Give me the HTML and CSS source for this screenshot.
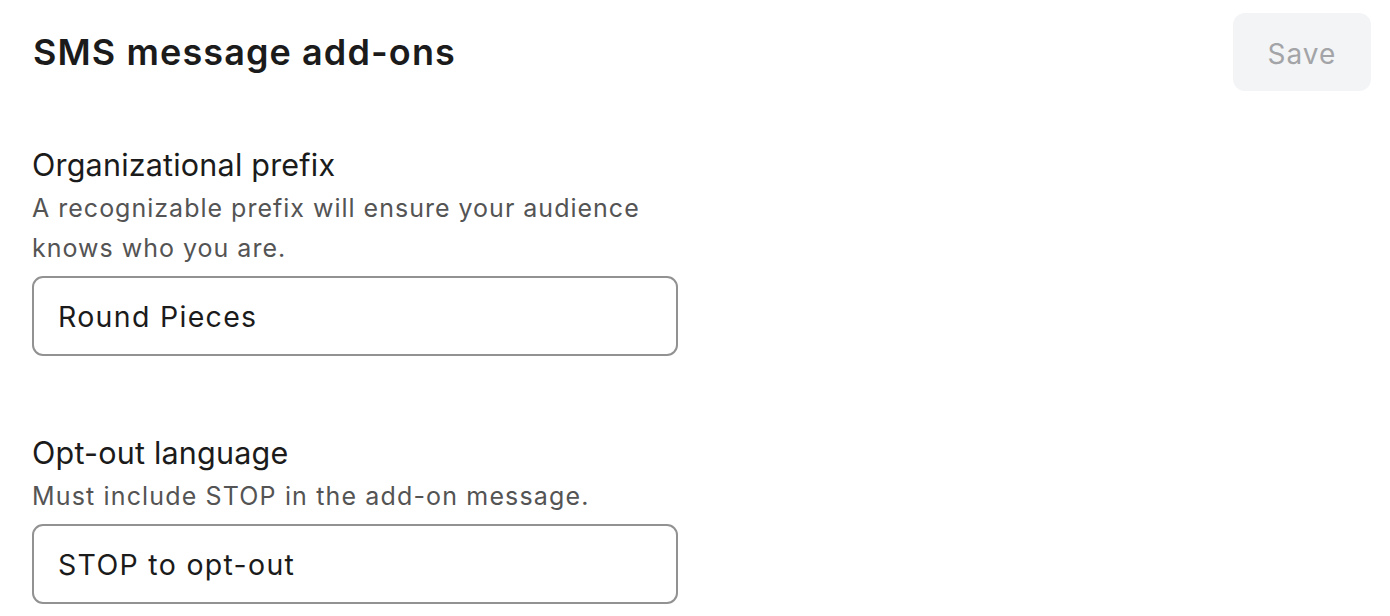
FILE: index.html
```html
<!DOCTYPE html>
<html lang="en">
<head>
<meta charset="utf-8">
<title>SMS message add-ons</title>
<link rel="stylesheet" href="styles.css">
</head>
<body>
<div class="page">
  <header class="header">
    <h1 class="title">SMS message add-ons</h1>
    <button class="save" type="button" disabled>Save</button>
  </header>
  <section class="field field-first">
    <label class="label" for="prefix">Organizational prefix</label>
    <p class="help">A recognizable prefix will ensure your audience<br>knows who you are.</p>
    <input class="input" id="prefix" type="text" value="Round Pieces">
  </section>
  <section class="field field-second">
    <label class="label" for="optout">Opt-out language</label>
    <p class="help help-wide">Must include STOP in the add-on message.</p>
    <input class="input" id="optout" type="text" value="STOP to opt-out">
  </section>
</div>
</body>
</html>
```
FILE: styles.css
```css
* { box-sizing: border-box; }
html, body { margin: 0; padding: 0; background: #ffffff; }
body {
  font-family: Inter, "Noto Sans", "Liberation Sans", sans-serif;
  color: #1b1b1b;
}
.page {
  padding: 13px 19px 0 32px;
}
.header {
  display: flex;
  justify-content: space-between;
  align-items: center;
  height: 78px;
}
.title {
  margin: 0 0 0 1px;
  font-size: 36px;
  font-weight: 600;
  letter-spacing: 1.1px;
  color: #1b1b1b;
}
.save {
  width: 138px;
  height: 78px;
  padding: 3px 0 0;
  border: none;
  border-radius: 12px;
  background: #f3f4f6;
  color: #a3a4a7;
  font-family: inherit;
  font-size: 28px;
  font-weight: 400;
  letter-spacing: 1px;
}
.field {
  display: flex;
  flex-direction: column;
  width: 646px;
}
.field-first { margin-top: 54px; }
.field-second { margin-top: 77px; }
.label {
  font-size: 30.5px;
  line-height: 40px;
  letter-spacing: 0.2px;
  color: #1b1b1b;
}
.help {
  margin: 3px 0 8px;
  font-size: 25px;
  line-height: 40px;
  letter-spacing: 1px;
  color: #545454;
}
.help-wide { letter-spacing: 1.15px; }
.input {
  height: 80px;
  flex: 0 0 80px;
  border: 2px solid #929292;
  border-radius: 11px;
  padding: 0 24px;
  font-family: inherit;
  font-size: 28.5px;
  letter-spacing: 1.3px;
  color: #1b1b1b;
  background: #fff;
  outline: none;
}
```
